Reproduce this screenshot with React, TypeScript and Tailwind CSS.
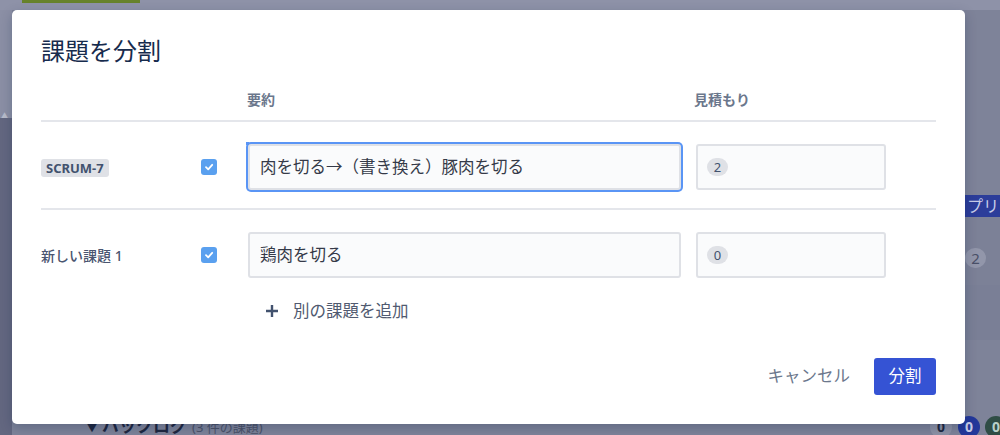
import React from "react";

const font = { fontFamily: '"Noto Sans", "Noto Sans CJK JP", sans-serif' };

function Check() {
  return (
    <div className="w-4 h-4 rounded-[3px] bg-[#5aa0ef] flex items-center justify-center shrink-0">
      <svg width="10" height="10" viewBox="0 0 10 10">
        <path d="M2 5.2 L4.2 7.3 L8.2 2.8" stroke="white" strokeWidth="1.8" fill="none" strokeLinecap="round" strokeLinejoin="round" />
      </svg>
    </div>
  );
}

function Estimate({ v }: { v: string }) {
  return (
    <div className="ml-[15px] w-[190px] h-[46px] rounded-[3px] border-2 border-[#dfe1e6] bg-[#fafbfc] flex items-center pl-[9px]">
      <span className="h-[18px] min-w-[21px] px-[6px] rounded-full bg-[#dfe1e6] text-[13px] leading-[18px] text-[#42526e] text-center">{v}</span>
    </div>
  );
}

export default function App() {
  return (
    <div className="relative w-[1000px] h-[435px] overflow-hidden bg-[#7e8399]" style={font}>
      {/* backdrop page */}
      <div className="absolute left-0 top-0 w-[1000px] h-[10px] bg-[#8e92a8]" />
      <div className="absolute left-[22px] top-0 w-[118px] h-[3px] bg-[#67822b]" />
      <div className="absolute left-0 top-[10px] w-[12px] h-[108px] bg-[#8b8fa5]" />
      <div className="absolute left-0 top-[118px] w-[12px] h-[317px] bg-[#636780]" />
      <div className="absolute left-[1px] top-[111px] text-[7px] text-[#b8bccb]">▲</div>
      <div className="absolute left-[965px] top-[195px] w-[40px] h-[22px] bg-[#2c3d9a] text-[16px] leading-[22px] text-[#c8cde8] pl-[2px]">プリ</div>
      <div className="absolute left-[965px] top-[217px] w-[35px] h-[68px] bg-[#7c8197]" />
      <div className="absolute left-[965px] top-[248px] w-[21px] h-[20px] rounded-full bg-[#9296aa] text-[15px] leading-[20px] text-[#4a5068] text-center">2</div>
      <div className="absolute left-[965px] top-[285px] w-[35px] h-[55px] bg-[#7a7f96]" />
      <div className="absolute left-[87px] top-[414px] flex items-baseline gap-[5px] text-[#1f2740]">
        <span className="text-[10px]">▼</span>
        <span className="text-[17px] font-bold leading-[24px]">バックログ</span>
        <span className="text-[13px] text-[#4c5268]">(3 件の課題)</span>
      </div>
      <div className="absolute left-[930px] top-[416px] w-[22px] h-[22px] rounded-full bg-[#8e92a6] text-[14px] leading-[22px] text-[#1f2740] text-center font-bold">0</div>
      <div className="absolute left-[958px] top-[416px] w-[22px] h-[22px] rounded-full bg-[#23389a] text-[14px] leading-[22px] text-[#c8cde8] text-center font-bold">0</div>
      <div className="absolute left-[985px] top-[416px] w-[22px] h-[22px] rounded-full bg-[#2f4d45] text-[14px] leading-[22px] text-[#b8d0c8] text-center font-bold">0</div>

      {/* dialog */}
      <div className="absolute left-[12px] top-[10px] w-[953px] h-[414px] bg-white rounded-[5px] shadow-[0_4px_12px_rgba(9,30,66,0.25)] flex flex-col px-[29px]">
        <h1 className="pt-[25px] text-[24px] leading-[32px] text-[#172b4d] font-normal">課題を分割</h1>

        <div className="mt-[23px] flex text-[14px] leading-[20px] font-semibold text-[#6b778c] pb-[10px]">
          <div className="w-[206px]" />
          <div className="w-[447px]">要約</div>
          <div>見積もり</div>
        </div>

        <div className="border-t-2 border-[#e4e6eb] pt-[22px] pb-[18px] flex items-center">
          <div className="w-[160px] shrink-0">
            <span className="inline-block h-[18px] px-[5px] rounded-[3px] bg-[#dfe1e6] text-[13px] leading-[18px] font-bold text-[#42526e]">SCRUM-7</span>
          </div>
          <Check />
          <div className="relative ml-[31px] w-[433px] h-[46px] rounded-[3px] border-2 border-[#dfe1e6] bg-[#fafbfc] shadow-[0_0_0_2px_#5a95f5] flex items-center pl-[10px] text-[16.5px] text-[#353a48]">
            肉を切る→（書き換え）豚肉を切る
            <div className="absolute -left-[4px] -top-[4px] w-[3px] h-[3px] bg-[#5a95f5]" />
          </div>
          <Estimate v="2" />
        </div>

        <div className="border-t-2 border-[#e4e6eb] pt-[22px] flex items-center">
          <div className="w-[160px] shrink-0 text-[14px] font-medium text-[#4a5570]">新しい課題 1</div>
          <Check />
          <div className="ml-[31px] w-[433px] h-[46px] rounded-[3px] border-2 border-[#dfe1e6] bg-[#fafbfc] flex items-center pl-[10px] text-[16.5px] text-[#353a48]">
            鶏肉を切る
          </div>
          <Estimate v="0" />
        </div>

        <div className="mt-[21px] ml-[223px] flex items-center h-[24px] text-[16.5px] text-[#505a70]">
          <svg width="14" height="14" viewBox="0 0 14 14" className="ml-[1px]">
            <path d="M7 1 V13 M1 7 H13" stroke="#42526e" strokeWidth="2.4" />
          </svg>
          <span className="ml-[14px]">別の課題を追加</span>
        </div>

        <div className="mt-auto pb-[29px] flex justify-end items-center gap-[24px]">
          <span className="text-[16.5px] text-[#6b778c]">キャンセル</span>
          <button className="w-[62px] h-[37px] rounded-[3px] bg-[#3553d4] text-white text-[16.5px]">分割</button>
        </div>
      </div>
    </div>
  );
}
